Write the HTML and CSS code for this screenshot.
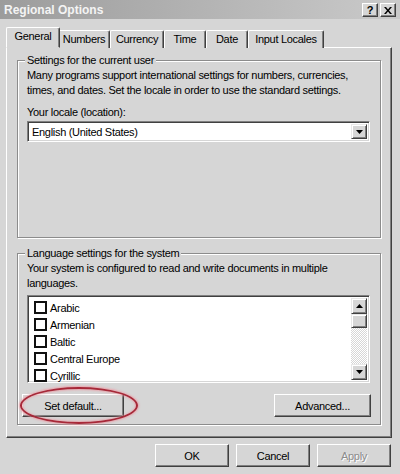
FILE: index.html
```html
<!DOCTYPE html>
<html>
<head>
<meta charset="utf-8">
<link rel="stylesheet" href="styles.css">
</head>
<body>
<div class="window">
  <div class="titlebar">
    <span class="title">Regional Options</span>
    <div class="tbtns">
      <span class="tbtn q">?</span>
      <span class="tbtn x"><svg width="8" height="7" viewBox="0 0 8 7"><path d="M0 0h2l2 2.5L6 0h2L5 3.5 8 7H6L4 4.5 2 7H0l3-3.5z" fill="#000"/></svg></span>
    </div>
  </div>
  <div class="tabs">
    <div class="tab sel w-general">General</div>
    <div class="tab w-numbers">Numbers</div>
    <div class="tab w-currency">Currency</div>
    <div class="tab w-time">Time</div>
    <div class="tab w-date">Date</div>
    <div class="tab w-input">Input Locales</div>
  </div>
  <div class="panel">
    <fieldset class="group g1">
      <legend>Settings for the current user</legend>
      <p class="desc">Many programs support international settings for numbers, currencies,<br>times, and dates. Set the locale in order to use the standard settings.</p>
      <div class="label">Your locale (location):</div>
      <div class="combo">
        <span class="combo-text">English (United States)</span>
        <span class="sbtn"><svg width="7" height="4" viewBox="0 0 7 4"><path d="M0 0h7L3.5 4z" fill="#000"/></svg></span>
      </div>
    </fieldset>
    <fieldset class="group g2">
      <legend>Language settings for the system</legend>
      <p class="desc">Your system is configured to read and write documents in multiple<br>languages.</p>
      <div class="list">
        <div class="items">
          <div class="item"><span class="cb"></span>Arabic</div>
          <div class="item"><span class="cb"></span>Armenian</div>
          <div class="item"><span class="cb"></span>Baltic</div>
          <div class="item"><span class="cb"></span>Central Europe</div>
          <div class="item"><span class="cb"></span>Cyrillic</div>
        </div>
        <div class="scroll">
          <span class="sbtn"><svg width="7" height="4" viewBox="0 0 7 4"><path d="M0 4h7L3.5 0z" fill="#000"/></svg></span>
          <span class="thumb"></span>
          <span class="track"></span>
          <span class="sbtn"><svg width="7" height="4" viewBox="0 0 7 4"><path d="M0 0h7L3.5 4z" fill="#000"/></svg></span>
        </div>
      </div>
      <div class="btnrow">
        <div class="btn setdef">Set default...</div>
        <div class="btn adv">Advanced...</div>
        <span class="ellipse"></span>
      </div>
    </fieldset>
  </div>
  <div class="footer">
    <div class="btn fbtn">OK</div>
    <div class="btn fbtn">Cancel</div>
    <div class="btn fbtn disabled">Apply</div>
  </div>
</div>
</body>
</html>
```
FILE: styles.css
```css
* { box-sizing: border-box; }
html, body { margin: 0; padding: 0; }
body {
  background: #d6d6d6;
  font-family: "Liberation Sans", Arial, sans-serif;
  font-size: 11px;
  letter-spacing: -0.3px;
  color: #000;
  width: 400px;
  height: 474px;
  overflow: hidden;
}
.window { width: 400px; height: 474px; background: #d6d6d6; }

.titlebar {
  height: 19px;
  display: flex;
  align-items: center;
  justify-content: space-between;
  padding: 0 4px 0 4px;
  background: linear-gradient(to right, #9c9c9c, #cacaca);
}
.title { color: #f4f4f4; font-weight: bold; font-size: 12px; letter-spacing: 0; }
.tbtns { display: flex; gap: 2px; margin-top: 1px; }
.tbtn {
  width: 16px; height: 14px;
  background: #d6d6d6;
  border-top: 1px solid #fff; border-left: 1px solid #fff;
  border-right: 1px solid #404040; border-bottom: 1px solid #404040;
  box-shadow: inset -1px -1px 0 #808080;
  display: flex; align-items: center; justify-content: center;
  font-weight: bold; font-size: 11px; line-height: 1;
}

.tabs {
  display: flex;
  align-items: flex-end;
  height: 28px;
  padding-left: 8px;
  position: relative;
  z-index: 1;
}
.tab {
  height: 18px;
  margin-bottom: -1px;
  background: #d6d6d6;
  border-top: 1px solid #fff;
  border-left: 1px solid #fff;
  border-right: 1px solid #404040;
  box-shadow: inset -1px 0 0 #808080;
  border-radius: 2px 2px 0 0;
  text-align: center;
  line-height: 16px;
  white-space: nowrap;
}
.tab.sel {
  height: 21px;
  margin: 0 -2px -1px -2px;
  line-height: 17px;
  border-bottom: 1px solid #d6d6d6;
  position: relative;
  z-index: 2;
}
.w-general { width: 50px; }
.tab.sel.w-general { width: 54px; }
.w-numbers { width: 52px; }
.w-currency { width: 54px; }
.w-time { width: 42px; }
.w-date { width: 42px; }
.w-input { width: 76px; }

.panel {
  margin: 0 8px 0 6px;
  height: 391px;
  border-top: 1px solid #fff;
  border-left: 1px solid #fff;
  border-right: 1px solid #404040;
  border-bottom: 1px solid #404040;
  box-shadow: inset -1px -1px 0 #808080;
  padding: 5px 10px 0 10px;
}

.group {
  margin: 0;
  min-width: 0;
  border: 1px solid #8c8c8c;
  box-shadow: inset 1px 1px 0 #fff, 1px 1px 0 #fff;
  padding: 0 10px 0 9px;
}
.group legend {
  padding: 0 2px;
  margin-left: -2px;
  line-height: 14px;
  background: #d6d6d6;
}
.desc { margin: 1px 0 0 0; line-height: 15px; white-space: nowrap; }
.label { margin-top: 7px; line-height: 14px; }

.combo {
  margin-top: 2px;
  height: 21px;
  background: #fff;
  border-top: 1px solid #808080; border-left: 1px solid #808080;
  border-right: 1px solid #fff; border-bottom: 1px solid #fff;
  box-shadow: inset 1px 1px 0 #404040, inset -1px -1px 0 #d6d6d6;
  display: flex; align-items: center; justify-content: space-between;
  padding: 2px;
}
.combo-text { padding-left: 2px; }
.sbtn {
  width: 16px; height: 15px;
  flex: none;
  background: #d6d6d6;
  border-top: 1px solid #e8e8e8; border-left: 1px solid #e8e8e8;
  border-right: 1px solid #404040; border-bottom: 1px solid #404040;
  box-shadow: inset 1px 1px 0 #fff, inset -1px -1px 0 #808080;
  display: flex; align-items: center; justify-content: center;
}
.g1 { padding-bottom: 95px; }

.g2 { margin-top: 8px; padding-bottom: 7px; }
.list {
  margin-top: 4px;
  height: 88px;
  background: #fff;
  border-top: 1px solid #808080; border-left: 1px solid #808080;
  border-right: 1px solid #fff; border-bottom: 1px solid #fff;
  box-shadow: inset 1px 1px 0 #404040, inset -1px -1px 0 #d6d6d6;
  display: flex;
  padding: 2px;
}
.items { flex: 1; padding: 1px 0 0 4px; }
.item {
  height: 17px;
  display: flex; align-items: center;
}
.cb {
  width: 13px; height: 13px;
  border: 2px solid #111;
  margin-right: 3px;
  background: #fff;
}
.scroll { width: 16px; display: flex; flex-direction: column; }
.scroll .sbtn { height: 16px; }
.thumb {
  height: 14px;
  background: #d6d6d6;
  border-top: 1px solid #e8e8e8; border-left: 1px solid #e8e8e8;
  border-right: 1px solid #404040; border-bottom: 1px solid #404040;
  box-shadow: inset 1px 1px 0 #fff, inset -1px -1px 0 #808080;
}
.track {
  flex: 1;
  background-color: #e8e8e8;
  background-image: repeating-conic-gradient(#ffffff 0 25%, #d6d6d6 0 50%);
  background-size: 2px 2px;
}

.btnrow {
  position: relative;
  margin: 11px -1px 0 -5px;
  display: flex; justify-content: space-between;
}
.btn {
  height: 23px;
  background: #d6d6d6;
  border-top: 1px solid #fff; border-left: 1px solid #fff;
  border-right: 1px solid #404040; border-bottom: 1px solid #404040;
  box-shadow: inset -1px -1px 0 #808080;
  display: flex; align-items: center; justify-content: center;
}
.setdef { width: 102px; }
.adv { width: 97px; }
.ellipse {
  position: absolute;
  left: -2px; top: -7px;
  width: 118px; height: 37px;
  border: 2px solid #a82838;
  border-radius: 50%;
  box-shadow: 0 0 2px 1px rgba(240,150,160,0.8), inset 0 0 2px 1px rgba(240,150,160,0.7);
}

.footer {
  display: flex;
  justify-content: flex-end;
  gap: 7px;
  padding-right: 9px;
  margin-top: 6px;
}
.fbtn { width: 74px; }
.disabled { color: #8c8c8c; text-shadow: 1px 1px 0 #fff; }
```
